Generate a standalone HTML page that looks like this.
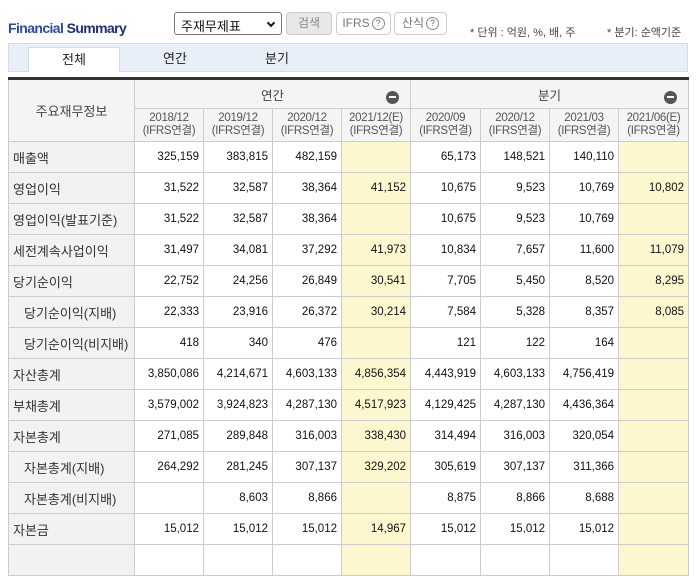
<!DOCTYPE html>
<html><head><meta charset="utf-8"><style>
*{margin:0;padding:0;box-sizing:border-box}
body{width:698px;height:548px;overflow:hidden;background:#fff;font-family:"Liberation Sans","Noto Sans CJK KR",sans-serif;color:#333;position:relative}
.abs{position:absolute}
.title{left:8px;top:20px;font-size:14px;font-weight:bold;letter-spacing:-0.6px;color:#1b2f78}
.title span{color:#2a4aa8}
.sel{left:174px;top:12px;width:108px;height:23px;border:1px solid #777;border-radius:3px;font-size:13px;padding:3px 6px;color:#111}
.sel i{position:absolute;right:7px;top:7px;width:6px;height:6px;border-right:2px solid #111;border-bottom:2px solid #111;transform:rotate(45deg)}
.btn{top:12px;height:23px;border:1px solid #ccc;border-radius:4px;font-size:12px;color:#777;text-align:center;line-height:21px}
.q{display:inline-block;width:13px;height:13px;border:1px solid #888;border-radius:50%;font-size:9px;line-height:11px;text-align:center;vertical-align:middle;margin-left:2px;color:#666}
.unit{top:24px;font-size:11px;color:#444}
.tabbar{left:8px;top:43px;width:680px;height:29px;background:#e9eff8;border:1px solid #d4dcea}
.tab{top:47px;font-size:13px;color:#222;height:25px;line-height:24px;text-align:center}
table{position:absolute;left:8px;top:77px;width:680px;border-collapse:collapse;table-layout:fixed;border-top:3px solid #333}
td,th{border:1px solid #ccc;font-size:12px;font-weight:normal}
th{background:#f4f4f4;color:#444}
tr.h1 th{height:30px;font-size:12.5px}
tr.h2 th{height:33px;font-size:11.5px;line-height:13px;color:#555;letter-spacing:-0.3px}
td{height:31px;text-align:right;padding-right:4px;color:#111;font-size:11.5px}
td.l{text-align:left;background:#f2f2f2;padding-left:4px;font-size:13px;color:#333}
td.l.i{padding-left:15px}
td.y{background:#fdf7cf}
.mn{position:absolute;width:13px;height:13px;border-radius:50%;background:#555}
.mn:after{content:"";position:absolute;left:3px;top:5px;width:7px;height:2px;background:#fff}
</style></head><body>
<div class="abs title"><span>Financial</span> Summary</div>
<div class="abs sel">주재무제표<i></i></div>
<div class="abs btn" style="left:286px;width:46px;background:#e8e8e8;color:#888">검색</div>
<div class="abs btn" style="left:336px;width:55px">IFRS<span class="q">?</span></div>
<div class="abs btn" style="left:394px;width:53px">산식<span class="q">?</span></div>
<div class="abs unit" style="left:470px">* 단위 : 억원, %, 배, 주</div>
<div class="abs unit" style="left:607px">* 분기: 순액기준</div>
<div class="abs tabbar"></div>
<div class="abs tab" style="left:28px;width:92px;background:#fff;border:1px solid #d4dcea;border-bottom:none">전체</div>
<div class="abs tab" style="left:150px;width:50px">연간</div>
<div class="abs tab" style="left:252px;width:50px">분기</div>
<table>
<colgroup><col style="width:126px"><col style="width:69px"><col style="width:69px"><col style="width:69px"><col style="width:69px"><col style="width:70px"><col style="width:69px"><col style="width:69px"><col style="width:70px"></colgroup>
<tr class="h1"><th rowspan="2" style="font-size:13px">주요재무정보</th><th colspan="4">연간</th><th colspan="4">분기</th></tr>
<tr class="h2"><th>2018/12<br>(IFRS연결)</th><th>2019/12<br>(IFRS연결)</th><th>2020/12<br>(IFRS연결)</th><th>2021/12(E)<br>(IFRS연결)</th><th>2020/09<br>(IFRS연결)</th><th>2020/12<br>(IFRS연결)</th><th>2021/03<br>(IFRS연결)</th><th>2021/06(E)<br>(IFRS연결)</th></tr>
<tr><td class="l">매출액</td><td>325,159</td><td>383,815</td><td>482,159</td><td class="y"></td><td>65,173</td><td>148,521</td><td>140,110</td><td class="y"></td></tr>
<tr><td class="l">영업이익</td><td>31,522</td><td>32,587</td><td>38,364</td><td class="y">41,152</td><td>10,675</td><td>9,523</td><td>10,769</td><td class="y">10,802</td></tr>
<tr><td class="l">영업이익(발표기준)</td><td>31,522</td><td>32,587</td><td>38,364</td><td class="y"></td><td>10,675</td><td>9,523</td><td>10,769</td><td class="y"></td></tr>
<tr><td class="l">세전계속사업이익</td><td>31,497</td><td>34,081</td><td>37,292</td><td class="y">41,973</td><td>10,834</td><td>7,657</td><td>11,600</td><td class="y">11,079</td></tr>
<tr><td class="l">당기순이익</td><td>22,752</td><td>24,256</td><td>26,849</td><td class="y">30,541</td><td>7,705</td><td>5,450</td><td>8,520</td><td class="y">8,295</td></tr>
<tr><td class="l i">당기순이익(지배)</td><td>22,333</td><td>23,916</td><td>26,372</td><td class="y">30,214</td><td>7,584</td><td>5,328</td><td>8,357</td><td class="y">8,085</td></tr>
<tr><td class="l i">당기순이익(비지배)</td><td>418</td><td>340</td><td>476</td><td class="y"></td><td>121</td><td>122</td><td>164</td><td class="y"></td></tr>
<tr><td class="l">자산총계</td><td>3,850,086</td><td>4,214,671</td><td>4,603,133</td><td class="y">4,856,354</td><td>4,443,919</td><td>4,603,133</td><td>4,756,419</td><td class="y"></td></tr>
<tr><td class="l">부채총계</td><td>3,579,002</td><td>3,924,823</td><td>4,287,130</td><td class="y">4,517,923</td><td>4,129,425</td><td>4,287,130</td><td>4,436,364</td><td class="y"></td></tr>
<tr><td class="l">자본총계</td><td>271,085</td><td>289,848</td><td>316,003</td><td class="y">338,430</td><td>314,494</td><td>316,003</td><td>320,054</td><td class="y"></td></tr>
<tr><td class="l i">자본총계(지배)</td><td>264,292</td><td>281,245</td><td>307,137</td><td class="y">329,202</td><td>305,619</td><td>307,137</td><td>311,366</td><td class="y"></td></tr>
<tr><td class="l i">자본총계(비지배)</td><td></td><td>8,603</td><td>8,866</td><td class="y"></td><td>8,875</td><td>8,866</td><td>8,688</td><td class="y"></td></tr>
<tr><td class="l">자본금</td><td>15,012</td><td>15,012</td><td>15,012</td><td class="y">14,967</td><td>15,012</td><td>15,012</td><td>15,012</td><td class="y"></td></tr>
<tr><td class="l"></td><td></td><td></td><td></td><td class="y"></td><td></td><td></td><td></td><td class="y"></td></tr>
</table>
<div class="mn" style="left:386px;top:91px"></div>
<div class="mn" style="left:664px;top:91px"></div>
</body></html>
